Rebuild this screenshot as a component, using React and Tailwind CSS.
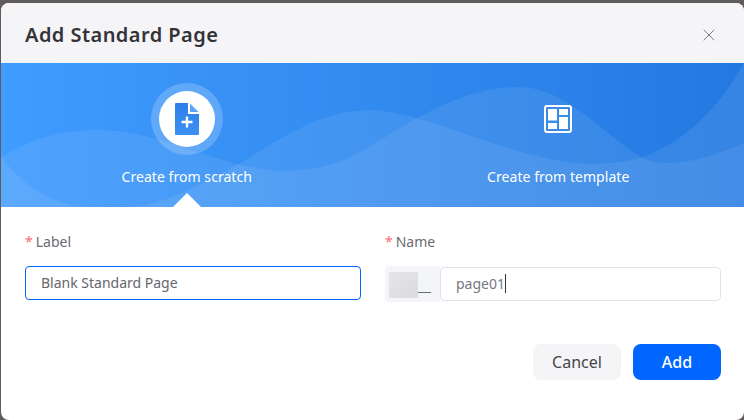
import React from 'react';
import { X } from 'lucide-react';

const font = 'font-["Noto_Sans","Open_Sans",sans-serif]';

const BannerWaves = () => (
  <svg className="absolute inset-0 w-full h-full" viewBox="0 0 743 144" preserveAspectRatio="none">
    <path
      d="M0 94 C30 76 60 67 95 67 C150 67 190 90 240 102 C275 110 300 110 335 100 C380 85 440 24 518 24 C565 24 600 70 640 94 C665 108 710 95 743 80 V144 H0 Z"
      fill="#fff"
      fillOpacity="0.08"
    />
    <path
      d="M0 94 C20 120 50 144 90 144 H130 C170 140 205 118 240 100 C285 72 320 47 372 47 C420 50 480 80 540 94 C580 104 615 102 642 94 C690 76 720 40 743 0 V144 H0 Z"
      fill="#fff"
      fillOpacity="0.08"
    />
  </svg>
);

const NewFileIcon = () => (
  <svg width="24" height="32" viewBox="0 0 24 32">
    <defs>
      <linearGradient id="fileFill" x1="0" y1="0" x2="0" y2="1">
        <stop offset="0" stopColor="#2f7fe8" />
        <stop offset="1" stopColor="#3b90f3" />
      </linearGradient>
    </defs>
    <path d="M1 0 H13 V11 H24 V31 a1 1 0 0 1 -1 1 H1 a1 1 0 0 1 -1 -1 V1 a1 1 0 0 1 1 -1 Z" fill="url(#fileFill)" />
    <path d="M15 0.5 L23.5 9 H15 Z" fill="#5aa5f5" />
    <path d="M10.8 13.5 H13.2 V17.8 H17.5 V20.2 H13.2 V24.5 H10.8 V20.2 H6.5 V17.8 H10.8 Z" fill="#fff" />
  </svg>
);

const TemplateIcon = () => (
  <svg width="28" height="28" viewBox="0 0 28 28">
    <rect x="1" y="1" width="26" height="26" rx="2" fill="none" stroke="#fff" strokeWidth="2" />
    <rect x="4" y="4" width="9" height="11.5" fill="#fff" />
    <rect x="15" y="4" width="9" height="6" fill="#fff" />
    <rect x="4" y="18" width="9" height="6" fill="#fff" />
    <rect x="15" y="12" width="9" height="12" fill="#fff" />
  </svg>
);

const FieldLabel = ({ children }) => (
  <div className="flex items-center h-[20px] text-[14px] text-[#6b6b72]">
    <span className="text-[#f76a6f] mr-[3px]">*</span>
    {children}
  </div>
);

export default function App() {
  return (
    <div className={`w-[744px] h-[420px] overflow-hidden bg-[#5f5c5b] pt-[3px] pl-px ${font}`}>
      <div className="h-[417px] rounded-lg overflow-hidden bg-white flex flex-col">
        <div className="h-[60px] shrink-0 bg-[#f5f5f7] flex items-center justify-between pt-1 pl-6 pr-[25px]">
          <h1 className="text-[20px] font-semibold tracking-[0.45px] text-[#333338]">Add Standard Page</h1>
          <X size={20} strokeWidth={1.2} className="text-[#7d7d88]" />
        </div>

        <div className="relative h-[144px] shrink-0 bg-gradient-to-r from-[#409cfe] to-[#2479e1] grid grid-cols-2">
          <BannerWaves />
          <div className="relative flex flex-col items-center pt-5">
            <div className="w-[72px] h-[72px] rounded-full bg-white/20 flex items-center justify-center">
              <div className="w-14 h-14 rounded-full bg-white flex items-center justify-center">
                <NewFileIcon />
              </div>
            </div>
            <span className="mt-[11px] text-[14px] tracking-[0.05px] text-white">Create from scratch</span>
            <div className="absolute bottom-0 left-1/2 -translate-x-1/2 w-0 h-0 border-x-[14px] border-x-transparent border-b-[14px] border-b-white" />
          </div>
          <div className="relative flex flex-col items-center pt-5">
            <div className="h-[72px] flex items-center justify-center">
              <TemplateIcon />
            </div>
            <span className="mt-[11px] text-[14px] tracking-[0.05px] text-white">Create from template</span>
          </div>
        </div>

        <div className="flex-1 flex flex-col pl-6 pr-[23px] pt-6">
          <div className="grid grid-cols-2 gap-6">
            <div>
              <FieldLabel>Label</FieldLabel>
              <div className="mt-[15px] h-[34px] flex items-center rounded-[4px] border border-[#0066ff] pl-[15px] pb-[2px] text-[14px] text-[#66666e]">
                Blank Standard Page
              </div>
            </div>
            <div>
              <FieldLabel>Name</FieldLabel>
              <div className="mt-[15px] flex items-center">
                <div className="w-[55px] h-9 bg-[#f4f5f9] rounded-l-[4px] flex items-end pl-1 pb-1">
                  <div className="w-[29px] h-[26px] bg-gradient-to-br from-[#e6e6e8] to-[#dadbdf]" />
                  <div className="w-[13px] h-px bg-[#6b6b72] mb-[5px]" />
                </div>
                <div className="flex-1 h-[34px] flex items-center rounded-[4px] border border-[#e1e1ea] pl-[15px] pb-[2px] text-[14px] text-[#77777f]">
                  page01
                  <span className="w-px h-[19px] bg-[#333338]" />
                </div>
              </div>
            </div>
          </div>
          <div className="mt-[42px] flex justify-end gap-3">
            <button className="w-[88px] h-9 rounded-lg bg-[#f5f5f7] text-[16px] text-[#45454c]">Cancel</button>
            <button className="w-[88px] h-9 rounded-lg bg-[#0066ff] text-[16px] font-medium text-white">Add</button>
          </div>
        </div>
      </div>
    </div>
  );
}
